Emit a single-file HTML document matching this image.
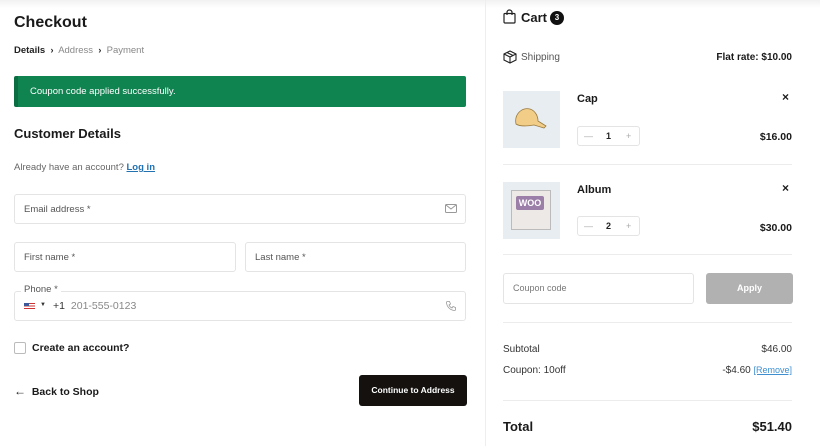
<!DOCTYPE html><html><head><style>
*{box-sizing:border-box;margin:0;padding:0}
body{width:820px;height:446px;overflow:hidden;background:#fff;font-family:"Liberation Sans",Arial,sans-serif;color:#1a1a1a;position:relative}
.a{position:absolute;white-space:nowrap}
.in{position:absolute;border:1px solid #e4e4e4;border-radius:3px;background:#fff}
.lb{position:absolute;font-size:9.5px;color:#555}
.hr{position:absolute;height:1px;background:#ececec;left:503px;width:289px}
.b{font-weight:bold}
</style></head><body>
<div class="a" style="left:0;top:0;width:820px;height:8px;background:linear-gradient(#f1f1f1,#fff)"></div>
<div class="a" style="left:485px;top:0;width:1px;height:446px;background:#eee"></div>

<div class="a b" style="left:14px;top:14px;font-size:16px">Checkout</div>
<div class="a" style="left:14px;top:45px;font-size:9.5px;color:#888"><b style="color:#222">Details</b>&nbsp; <b style="color:#222;font-size:9px">›</b>&nbsp; Address&nbsp; <b style="color:#222;font-size:9px">›</b>&nbsp; Payment</div>
<div class="a" style="left:14px;top:76px;width:452px;height:31px;background:#0f8350;border-left:4px solid #0b6e42;border-radius:2px"></div>
<div class="a" style="left:30px;top:86px;font-size:9.5px;color:#fff">Coupon code applied successfully.</div>
<div class="a b" style="left:14px;top:126px;font-size:13px">Customer Details</div>
<div class="a" style="left:14px;top:162px;font-size:9.5px;color:#666">Already have an account? <span style="color:#2271b1;text-decoration:underline;font-weight:bold">Log in</span></div>

<div class="in" style="left:14px;top:194px;width:452px;height:30px"></div>
<div class="lb" style="left:24px;top:204px">Email address *</div>
<svg class="a" style="left:445px;top:203px" width="12" height="11" viewBox="0 0 12 11" fill="none" stroke="#999"><rect x="0.5" y="1.5" width="11" height="8" rx="1"/><path d="M1 2l5 4 5-4"/></svg>
<div class="in" style="left:14px;top:242px;width:222px;height:30px"></div>
<div class="lb" style="left:24px;top:252px">First name *</div>
<div class="in" style="left:245px;top:242px;width:221px;height:30px"></div>
<div class="lb" style="left:255px;top:252px">Last name *</div>
<div class="in" style="left:14px;top:291px;width:452px;height:30px"></div>
<div class="lb" style="left:21px;top:284px;background:#fff;padding:0 3px">Phone *</div>
<div class="a" style="left:24px;top:303px;width:11px;height:6px;background:linear-gradient(#c33 0 20%,#fff 20% 40%,#c33 40% 60%,#fff 60% 80%,#c33 80%)"><div style="width:5px;height:3px;background:#3c5a9a"></div></div>
<div class="a" style="left:40px;top:302px;font-size:6px;color:#333">▼</div>
<div class="a" style="left:53px;top:300px;font-size:10.5px;color:#333">+1 <span style="color:#888;margin-left:3px">201-555-0123</span></div>
<svg class="a" style="left:445px;top:300px" width="12" height="12" viewBox="0 0 24 24" fill="none" stroke="#999" stroke-width="1.6"><path d="M5 3h4l2 5-3 2a11 11 0 006 6l2-3 5 2v4a2 2 0 01-2 2A17 17 0 013 5a2 2 0 012-2z"/></svg>
<div class="a" style="left:14px;top:342px;width:12px;height:12px;border:1px solid #bbb;border-radius:2px"></div>
<div class="a b" style="left:32px;top:342px;font-size:10.5px">Create an account?</div>
<div class="a b" style="left:14px;top:384px;font-size:10.5px"><span style="font-size:12px">&larr;</span>&nbsp; Back to Shop</div>
<div class="a b" style="left:359px;top:375px;width:108px;height:31px;background:#14110f;border-radius:3px;color:#fff;font-size:8.5px;text-align:center;line-height:31px">Continue to Address</div>

<svg class="a" style="left:503px;top:9px" width="13" height="15" viewBox="0 0 13 15" fill="none" stroke="#222" stroke-width="1.2"><rect x="1" y="4.5" width="11" height="9.5" rx="1"/><path d="M4 6V3.5a2.5 2.5 0 015 0V6"/></svg>
<div class="a b" style="left:521px;top:10px;font-size:13px">Cart</div>
<div class="a b" style="left:550px;top:11px;width:14px;height:14px;border-radius:7px;background:#111;color:#fff;font-size:8px;text-align:center;line-height:14px">3</div>
<svg class="a" style="left:503px;top:50px" width="14" height="14" viewBox="0 0 14 14" fill="none" stroke="#222" stroke-width="1.1"><path d="M7 1l6 3v6l-6 3-6-3V4z M1 4l6 3 6-3 M7 7v6 M4 2.5l6 3"/></svg>
<div class="a" style="left:521px;top:52px;font-size:10px;color:#555">Shipping</div>
<div class="a b" style="right:28px;top:52px;font-size:10px">Flat rate: $10.00</div>

<div class="a" style="left:503px;top:91px;width:57px;height:57px;background:#e8edf2"></div>
<svg class="a" style="left:512px;top:104px" width="38" height="30" viewBox="0 0 38 30"><path d="M4 20C2 10 10 3 18 5c6 2 8 8 8 12l8 5-2 2-10-3c-6 1-14 2-18-1z" fill="#f2cd88" stroke="#9a7a3e" stroke-width=".8"/></svg>
<div class="a b" style="left:577px;top:93px;font-size:11px">Cap</div>
<div class="a" style="left:782px;top:90px;font-size:12px;font-weight:bold">×</div>
<div class="in" style="left:577px;top:126px;width:63px;height:20px;font-size:9px;line-height:18px;color:#aaa"><span style="position:absolute;left:6px">—</span><b style="position:absolute;left:28px;color:#222">1</b><span style="position:absolute;left:48px">+</span></div>
<div class="a b" style="right:28px;top:131px;font-size:10.5px">$16.00</div>
<div class="hr" style="top:164px"></div>

<div class="a" style="left:503px;top:182px;width:57px;height:57px;background:#e8edf2"></div>
<div class="a" style="left:511px;top:190px;width:40px;height:40px;border:1px solid #bbb;background:#ece9e6"></div>
<div class="a b" style="left:516px;top:196px;width:28px;height:14px;background:#9c7fa8;color:#fff;font-size:9px;text-align:center;line-height:14px;border-radius:2px">WOO</div>
<div class="a b" style="left:577px;top:184px;font-size:11px">Album</div>
<div class="a" style="left:782px;top:181px;font-size:12px;font-weight:bold">×</div>
<div class="in" style="left:577px;top:216px;width:63px;height:20px;font-size:9px;line-height:18px;color:#aaa"><span style="position:absolute;left:6px">—</span><b style="position:absolute;left:28px;color:#222">2</b><span style="position:absolute;left:48px">+</span></div>
<div class="a b" style="right:28px;top:222px;font-size:10.5px">$30.00</div>
<div class="hr" style="top:254px"></div>

<div class="in" style="left:503px;top:273px;width:191px;height:31px"></div>
<div class="a" style="left:513px;top:283px;font-size:9px;color:#777">Coupon code</div>
<div class="a b" style="left:706px;top:273px;width:87px;height:31px;background:#b1b1b1;border-radius:3px;color:#fff;font-size:9px;text-align:center;line-height:31px">Apply</div>
<div class="hr" style="top:322px"></div>
<div class="a" style="left:503px;top:344px;font-size:10px;color:#333">Subtotal</div>
<div class="a" style="right:28px;top:344px;font-size:10px;color:#333">$46.00</div>
<div class="a" style="left:503px;top:365px;font-size:10px;color:#333">Coupon: 10off</div>
<div class="a" style="right:28px;top:365px;font-size:10px;color:#333">-$4.60 <span style="color:#3f8fd0;text-decoration:underline;font-size:9px">[Remove]</span></div>
<div class="hr" style="top:400px"></div>
<div class="a b" style="left:503px;top:419px;font-size:13px">Total</div>
<div class="a b" style="right:28px;top:419px;font-size:13px">$51.40</div>
</body></html>
